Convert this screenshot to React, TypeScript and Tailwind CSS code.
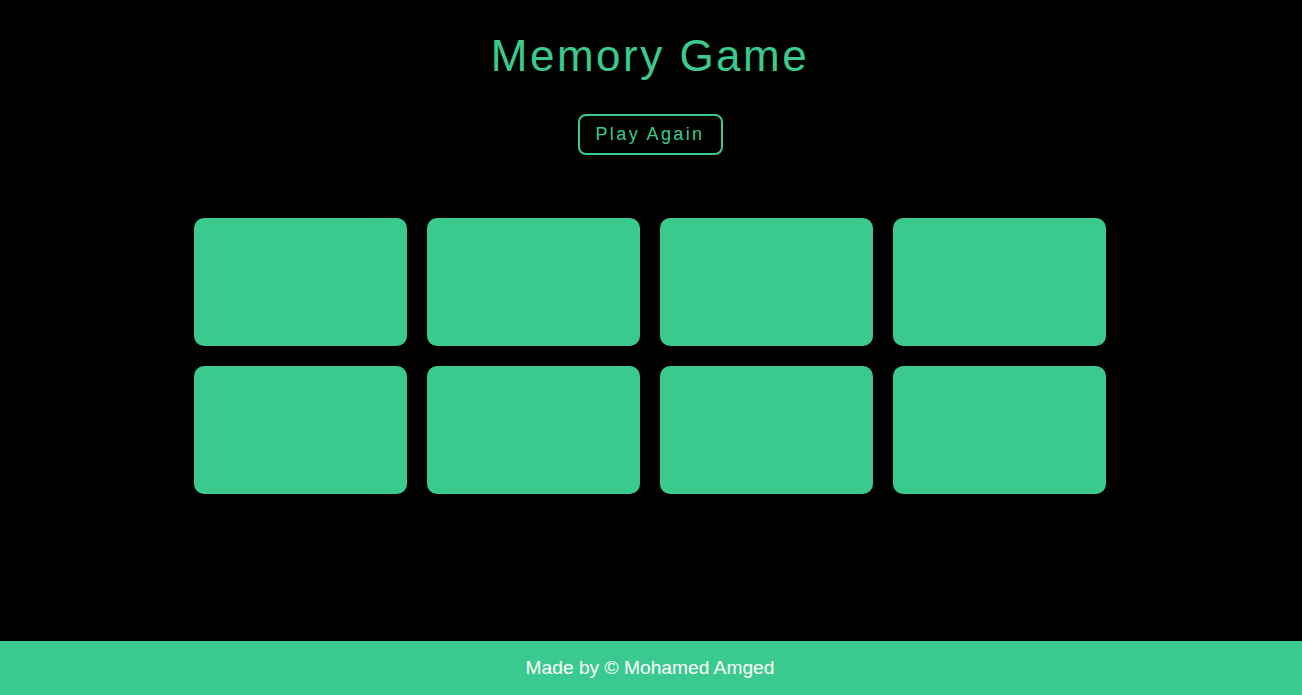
import React, { useState } from 'react';

const cards = Array.from({ length: 8 }, (_, i) => i);

export default function App() {
  const [flipped, setFlipped] = useState<number[]>([]);

  return (
    <div className="min-h-screen bg-black flex flex-col font-['Liberation_Sans',Arial,sans-serif]">
      <main className="flex-1 flex flex-col items-center pr-[2px]">
        <h1 className="mt-[34px] text-[44px] leading-none tracking-[2.5px] text-[#3bca8d]">Memory Game</h1>
        <button
          onClick={() => setFlipped([])}
          className="mt-[36px] w-[145px] h-[41px] flex items-center justify-center border-2 border-[#3bca8d] rounded-lg text-[18px] tracking-[2.4px] text-[#3bca8d]"
        >
          Play Again
        </button>
        <div className="mt-[63px] grid grid-cols-4 gap-5">
          {cards.map(c => (
            <div
              key={c}
              onClick={() => setFlipped(f => (f.includes(c) ? f : [...f, c]))}
              className="w-[213px] h-[128px] rounded-[10px] bg-[#3bca8d] cursor-pointer"
            />
          ))}
        </div>
      </main>
      <footer className="h-[54px] pr-[2px] bg-[#3bca8d] flex items-center justify-center text-white text-[19.2px]">
        Made by © Mohamed Amged
      </footer>
    </div>
  );
}
